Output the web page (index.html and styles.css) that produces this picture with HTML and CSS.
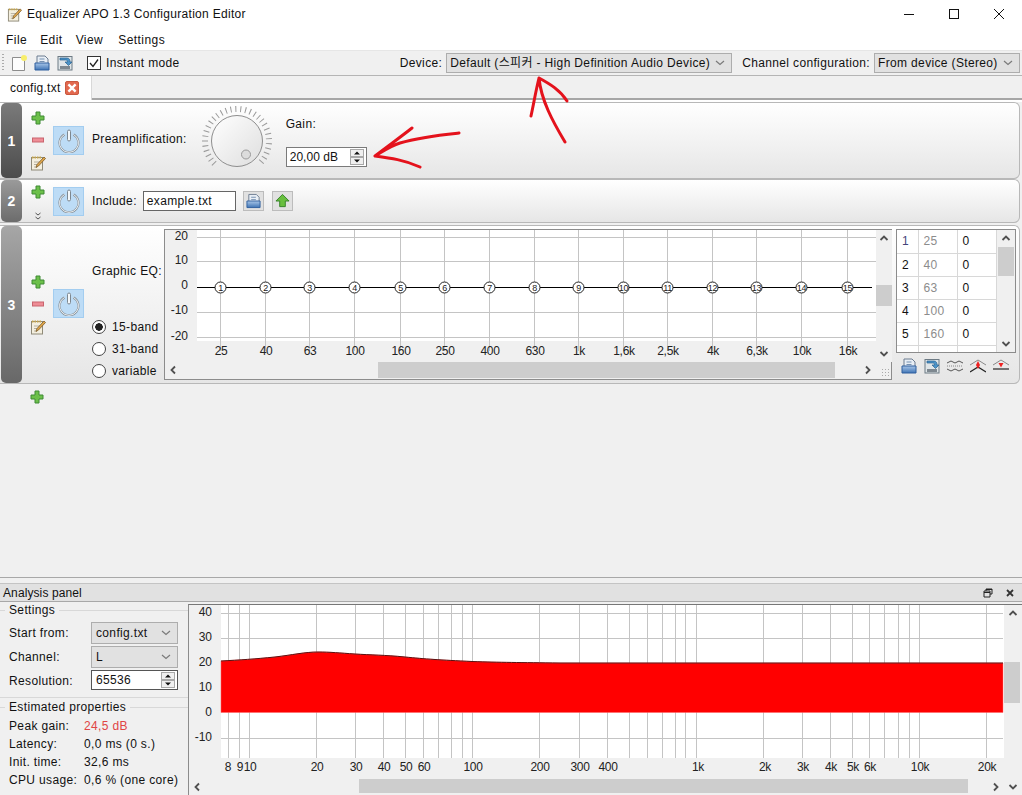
FILE: index.html
```html
<!DOCTYPE html>
<html lang="en">
<head>
<meta charset="utf-8">
<title>Equalizer APO 1.3 Configuration Editor</title>
<link rel="stylesheet" href="styles.css">
</head>
<body>
<svg class="defs" width="0" height="0">
  <defs>
    <linearGradient id="floppyG" x1="0" y1="0" x2="0" y2="1"><stop offset="0" stop-color="#a9c6e8"/><stop offset="1" stop-color="#3f74b5"/></linearGradient>
    <linearGradient id="knobG" x1="0" y1="0" x2="1" y2="1"><stop offset="0" stop-color="#ffffff"/><stop offset="1" stop-color="#dedede"/></linearGradient>
    <symbol id="i-plus" viewBox="0 0 14 14"><path d="M5 1h4v4h4v4H9v4H5V9H1V5h4z" fill="#6cc04a" stroke="#3f8a35" stroke-width="1"/></symbol>
    <symbol id="i-minus" viewBox="0 0 14 14"><rect x="1.5" y="5" width="11" height="4" fill="#ee8d96" stroke="#c9646e"/></symbol>
    <symbol id="i-note" viewBox="0 0 16 16"><rect x="1.5" y="2.5" width="11" height="12.5" fill="#f4efdf" stroke="#8f8a78"/><path d="M2 2.5h10" stroke="#c7a64b" stroke-width="2" stroke-dasharray="1.5 1"/><path d="M4 7h6M4 9.5h4M4 12h3" stroke="#b5b0a0"/><path d="M6 12.5l1-3 7-7.5 1.5 1.500-7 7.500z" fill="#e0a64a" stroke="#7a5a2a" stroke-width=".8"/></symbol>
    <symbol id="i-power" viewBox="0 0 24 24"><path d="M7.500 5.500a9.500 9.500 0 1 0 9 0" fill="none" stroke="#8a949c" stroke-width="2.200"/><path d="M7.500 5.500a9.500 9.500 0 1 0 9 0" fill="none" stroke="#f3f7fa" stroke-width=".9"/><rect x="10.500" y="1" width="3" height="11" rx="1.500" fill="#f3f7fa" stroke="#7e8890"/></symbol>
    <symbol id="i-open" viewBox="0 0 16 16"><path d="M3 1h8l3 3v6H3z" fill="#e8eef5" stroke="#6c7c90"/><path d="M5.500 4h5M5.500 6.500h5" stroke="#7590b0"/><path d="M1 8h14v7H1z" fill="url(#floppyG)" stroke="#2f5f9e"/></symbol>
    <symbol id="i-save" viewBox="0 0 16 16"><rect x="1" y="1.500" width="14" height="13.500" fill="#dfe5e8" stroke="#6d7a84"/><rect x="3" y="11" width="10" height="3" fill="#7e8890"/><path d="M3 3h7c2.500 0 3 2 3 4h2l-3.500 3.500L8 7h2.500c0-1.500-.5-2-2-2H3z" fill="#4a93c8" stroke="#2b628f" stroke-width=".7"/></symbol>
    <symbol id="i-new" viewBox="0 0 16 16"><path d="M1.500 2.500h12v13h-12z" fill="#fdfdfd" stroke="#8d8d8d"/><circle cx="13" cy="3" r="3" fill="#f8ee6b"/></symbol>
    <symbol id="i-up" viewBox="0 0 16 16"><path d="M8 1l7 7h-4v6H5V8H1z" fill="#68bf3e" stroke="#35822a"/></symbol>
    <symbol id="i-chev-d" viewBox="0 0 10 6"><path d="M1 1l4 3.500L9 1" fill="none" stroke="#7a7a7a" stroke-width="1.200"/></symbol>
    <symbol id="sb-up" viewBox="0 0 10 8"><path d="M1.500 6l3.500-3.500L8.500 6" fill="none" stroke="#505050" stroke-width="1.800"/></symbol>
    <symbol id="sb-dn" viewBox="0 0 10 8"><path d="M1.500 2L5 5.500 8.500 2" fill="none" stroke="#505050" stroke-width="1.800"/></symbol>
    <symbol id="sb-lf" viewBox="0 0 8 10"><path d="M6 1.500L2.500 5 6 8.500" fill="none" stroke="#505050" stroke-width="1.800"/></symbol>
    <symbol id="sb-rt" viewBox="0 0 8 10"><path d="M2 1.500L5.500 5 2 8.500" fill="none" stroke="#505050" stroke-width="1.800"/></symbol>
    <symbol id="spin" viewBox="0 0 14 16"><rect x=".5" y=".5" width="13" height="7" fill="#efefef" stroke="#a8a8a8"/><rect x=".5" y="8.500" width="13" height="7" fill="#efefef" stroke="#a8a8a8"/><path d="M7 2.500L10 5.500H4zM7 13.500L4 10.500h6z" fill="#111"/></symbol>
  </defs>
</svg>

<div class="app">
  <header class="titlebar">
    <svg class="ico14"><use href="#i-note"/></svg>
    <span class="title-text">Equalizer APO 1.3 Configuration Editor</span>
    <div class="winctl">
      <svg class="winbtn" viewBox="0 0 12 12"><path d="M1 6.500h10" stroke="#111" stroke-width="1"/></svg>
      <svg class="winbtn" viewBox="0 0 12 12"><rect x="1.500" y="1.500" width="9" height="9" fill="none" stroke="#111"/></svg>
      <svg class="winbtn" viewBox="0 0 12 12"><path d="M1 1l10 10M11 1L1 11" stroke="#111"/></svg>
    </div>
  </header>

  <nav class="menubar"><span>File</span><span>Edit</span><span>View</span><span class="settings-menu">Settings</span></nav>

  <div class="toolbar">
    <div class="grip"></div>
    <svg class="tool new"><use href="#i-new"/></svg>
    <svg class="tool"><use href="#i-open"/></svg>
    <svg class="tool"><use href="#i-save"/></svg>
    <label class="instant"><span class="check"><svg viewBox="0 0 12 12"><path d="M2 6l3 3.500L10 2.500" fill="none" stroke="#222" stroke-width="1.300"/></svg></span>Instant mode</label>
    <span class="dev-label">Device:</span>
    <div class="combo dev-combo"><span class="dev-text">Default (스피커 - High Definition Audio Device)</span><svg class="chev"><use href="#i-chev-d"/></svg></div>
    <span class="chan-label">Channel configuration:</span>
    <div class="combo chan-combo"><span>From device (Stereo)</span><svg class="chev"><use href="#i-chev-d"/></svg></div>
  </div>

  <div class="tabbar">
    <div class="tab">config.txt<span class="tab-x"><svg viewBox="0 0 10 10"><path d="M2 2l6 6M8 2L2 8" stroke="#fff" stroke-width="2"/></svg></span></div>
  </div>

  <main class="workspace">
    <section class="row row1">
      <div class="handle h1">1</div>
      <div class="actions a1">
        <svg class="ico14"><use href="#i-plus"/></svg>
        <svg class="ico14"><use href="#i-minus"/></svg>
        <svg class="ico16"><use href="#i-note"/></svg>
      </div>
      <div class="power"><svg><use href="#i-power"/></svg></div>
      <span class="row-label pre">Preamplification:</span>
      <svg class="knob" viewBox="0 0 72 72">
        <path d="M13.400 58.600A32 32 0 1 1 58.600 58.600" fill="none" stroke="#9a9a9a" stroke-width="6" stroke-dasharray="1 3.900"/>
        <circle cx="36" cy="36" r="25.500" fill="url(#knobG)" stroke="#8e8e8e"/>
        <circle cx="45" cy="49.500" r="4.500" fill="#dcdcdc" stroke="#9a9a9a"/>
      </svg>
      <div class="gain">
        <span>Gain:</span>
        <div class="spinbox gainbox"><span>20,00 dB</span><svg class="spin"><use href="#spin"/></svg></div>
      </div>
    </section>

    <section class="row row2">
      <div class="handle h2">2</div>
      <div class="actions a2">
        <svg class="ico14"><use href="#i-plus"/></svg>
        <svg class="more" viewBox="0 0 8 8"><path d="M1.500 1l2.500 2 2.500-2M1.500 5l2.500 2 2.500-2" fill="none" stroke="#555"/></svg>
      </div>
      <div class="power"><svg><use href="#i-power"/></svg></div>
      <span class="row-label">Include:</span>
      <div class="textfield">example.txt</div>
      <button class="iconbtn"><svg><use href="#i-open"/></svg></button>
      <button class="iconbtn up"><svg><use href="#i-up"/></svg></button>
    </section>

    <section class="row row3">
      <div class="handle h3">3</div>
      <div class="actions a3">
        <svg class="ico14"><use href="#i-plus"/></svg>
        <svg class="ico14"><use href="#i-minus"/></svg>
        <svg class="ico16"><use href="#i-note"/></svg>
      </div>
      <div class="power"><svg><use href="#i-power"/></svg></div>
      <div class="eq-side">
        <span class="row-label">Graphic EQ:</span>
        <div class="radios">
          <div class="radio on"><i></i>15-band</div>
          <div class="radio"><i></i>31-band</div>
          <div class="radio"><i></i>variable</div>
        </div>
      </div>
      <div class="eq-widget">
        <svg class="eq-chart" viewBox="165 230 711 132">
          <rect x="165" y="230" width="711" height="132" fill="#f0f0f0"/>
          <rect x="197" y="230" width="679" height="111" fill="#fff"/>
          <path class="grid" d="M197 237.500H876M197 261.500H876M197 312.500H876M197 337.500H876M220.500 230V351M265.500 230V351M309.500 230V351M354.500 230V351M400.500 230V351M444.500 230V351M489.500 230V351M534.500 230V351M578.500 230V351M623.500 230V351M667.500 230V351M712.500 230V351M756.500 230V351M801.500 230V351M847.500 230V351"/>
          <path d="M197 287.500H872" stroke="#000" stroke-width="1.200"/>
          <g class="nodes">
            <circle cx="220.500" cy="287.500" r="5.500"/><circle cx="265.500" cy="287.500" r="5.500"/><circle cx="309.500" cy="287.500" r="5.500"/><circle cx="354.500" cy="287.500" r="5.500"/><circle cx="400.500" cy="287.500" r="5.500"/><circle cx="444.500" cy="287.500" r="5.500"/><circle cx="489.500" cy="287.500" r="5.500"/><circle cx="534.500" cy="287.500" r="5.500"/><circle cx="578.500" cy="287.500" r="5.500"/><circle cx="623.500" cy="287.500" r="5.500"/><circle cx="667.500" cy="287.500" r="5.500"/><circle cx="712.500" cy="287.500" r="5.500"/><circle cx="756.500" cy="287.500" r="5.500"/><circle cx="801.500" cy="287.500" r="5.500"/><circle cx="847.500" cy="287.500" r="5.500"/>
          </g>
          <g class="nodenum">
            <text x="220.500" y="291">1</text><text x="265.500" y="291">2</text><text x="309.500" y="291">3</text><text x="354.500" y="291">4</text><text x="400.500" y="291">5</text><text x="444.500" y="291">6</text><text x="489.500" y="291">7</text><text x="534.500" y="291">8</text><text x="578.500" y="291">9</text><text x="623.500" y="291">10</text><text x="667.500" y="291">11</text><text x="712.500" y="291">12</text><text x="756.500" y="291">13</text><text x="801.500" y="291">14</text><text x="847.500" y="291">15</text>
          </g>
          <g class="ylab">
            <text x="188" y="240">20</text><text x="188" y="264">10</text><text x="188" y="289">0</text><text x="188" y="314">-10</text><text x="188" y="340">-20</text>
          </g>
          <g class="xlab">
            <text x="221" y="355">25</text><text x="266" y="355">40</text><text x="310" y="355">63</text><text x="355" y="355">100</text><text x="401" y="355">160</text><text x="445" y="355">250</text><text x="490" y="355">400</text><text x="535" y="355">630</text><text x="579" y="355">1k</text><text x="624" y="355">1,6k</text><text x="668" y="355">2,5k</text><text x="713" y="355">4k</text><text x="757" y="355">6,3k</text><text x="802" y="355">10k</text><text x="848" y="355">16k</text>
          </g>
        </svg>
        <div class="vbar eq-v">
          <svg class="sb"><use href="#sb-up"/></svg>
          <div class="track"><div class="thumb"></div></div>
          <svg class="sb"><use href="#sb-dn"/></svg>
        </div>
        <div class="hbar eq-h">
          <svg class="sbh"><use href="#sb-lf"/></svg>
          <div class="track"><div class="thumb"></div></div>
          <svg class="sbh"><use href="#sb-rt"/></svg>
        </div>
        <div class="corner"></div>
      </div>
      <div class="table-side">
        <div class="table-box">
          <table class="bands">
            <tr><th>1</th><td class="f">25</td><td>0</td></tr>
            <tr><th>2</th><td class="f">40</td><td>0</td></tr>
            <tr><th>3</th><td class="f">63</td><td>0</td></tr>
            <tr><th>4</th><td class="f">100</td><td>0</td></tr>
            <tr><th>5</th><td class="f">160</td><td>0</td></tr>
            <tr class="cut"><th></th><td></td><td></td></tr>
          </table>
          <div class="vbar tb-v">
            <svg class="sb"><use href="#sb-up"/></svg>
            <div class="track"><div class="thumb"></div></div>
            <svg class="sb"><use href="#sb-dn"/></svg>
          </div>
        </div>
        <div class="table-tools">
          <svg class="tool"><use href="#i-open"/></svg>
          <svg class="tool"><use href="#i-save"/></svg>
          <svg class="tool" viewBox="0 0 16 16"><path d="M0 5l4-2 4 2 4-2 4 2M0 11l4 2 4-2 4 2 4-2" fill="none" stroke="#555"/><path d="M0 8h16" stroke="#888" stroke-dasharray="1 1"/></svg>
          <svg class="tool" viewBox="0 0 16 16"><path d="M0 7l8-5 8 5" fill="none" stroke="#888"/><path d="M0 14l8-5 8 5" fill="none" stroke="#222" stroke-width="1.200"/><path d="M8 3l2 4H6zM8 11L6 7h4z" fill="#e22"/></svg>
          <svg class="tool" viewBox="0 0 16 16"><path d="M0 7l8-5 8 5" fill="none" stroke="#888"/><path d="M0 11h16" stroke="#222" stroke-width="1.200"/><path d="M8 9.500L5.500 5h5z" fill="#e22"/></svg>
        </div>
      </div>
    </section>

    <div class="add-row"><svg class="ico14"><use href="#i-plus"/></svg></div>
  </main>

  <section class="dock">
    <div class="dock-title">
      <span>Analysis panel</span>
      <svg class="dock-ico" viewBox="0 0 10 10"><path d="M3 3V1h6v5H7M1 3h6v6H1zM1 4.500h6M3 1.500h6" fill="none" stroke="#222"/></svg>
      <svg class="dock-ico" viewBox="0 0 10 10"><path d="M2 2l6 6M8 2L2 8" stroke="#333" stroke-width="1.800"/></svg>
    </div>
    <div class="dock-body">
      <aside class="dock-side">
        <fieldset class="group settings">
          <legend>Settings</legend>
          <div class="form-row"><span>Start from:</span><div class="combo small"><span>config.txt</span><svg class="chev"><use href="#i-chev-d"/></svg></div></div>
          <div class="form-row"><span>Channel:</span><div class="combo small"><span>L</span><svg class="chev"><use href="#i-chev-d"/></svg></div></div>
          <div class="form-row"><span>Resolution:</span><div class="spinbox small res"><span>65536</span><svg class="spin"><use href="#spin"/></svg></div></div>
        </fieldset>
        <fieldset class="group props">
          <legend>Estimated properties</legend>
          <dl class="prop"><dt>Peak gain:</dt><dd class="peak">24,5 dB</dd></dl>
          <dl class="prop"><dt>Latency:</dt><dd>0,0 ms (0 s.)</dd></dl>
          <dl class="prop"><dt>Init. time:</dt><dd>32,6 ms</dd></dl>
          <dl class="prop"><dt>CPU usage:</dt><dd>0,6 % (one core)</dd></dl>
        </fieldset>
      </aside>
      <div class="an-widget">
        <svg class="an-chart" viewBox="189 605 815 174">
          <rect x="189" y="605" width="815" height="174" fill="#f0f0f0"/>
          <rect x="221" y="605" width="783" height="153" fill="#fff"/>
          <path class="grid" d="M221 613.500H1003M221 638.500H1003M221 663.500H1003M221 688.500H1003M221 738.500H1003M228.500 604V758M239.500 604V758M249.500 604V758M316.500 604V758M355.500 604V758M383.500 604V758M405.500 604V758M423.500 604V758M438.500 604V758M451.500 604V758M462.500 604V758M472.500 604V758M539.500 604V758M579.500 604V758M607.500 604V758M629.500 604V758M647.500 604V758M662.500 604V758M675.500 604V758M685.500 604V758M696.500 604V758M763.500 604V758M802.500 604V758M830.500 604V758M852.500 604V758M869.500 604V758M884.500 604V758M898.500 604V758M909.500 604V758M919.500 604V758M986.500 604V758"/>
          <path d="M221 661C240 660 255 659 275 657C292 655 305 652 318 652C330 652 340 653 355 654C370 655 385 655 405 657C425 659 440 660 472 661.500C500 662.500 520 662.500 560 663H1003V712.500H221Z" fill="#f00" stroke="#f66" stroke-width=".5"/>
          <path d="M221 661C240 660 255 659 275 657C292 655 305 652 318 652C330 652 340 653 355 654C370 655 385 655 405 657C425 659 440 660 472 661.500C500 662.500 520 662.500 560 663H1003" fill="none" stroke="#5a1010" stroke-width="1"/>
          <g class="ylab">
            <text x="212" y="616">40</text><text x="212" y="641">30</text><text x="212" y="666">20</text><text x="212" y="691">10</text><text x="212" y="716">0</text><text x="212" y="741">-10</text>
          </g>
          <g class="xlab">
            <text x="228" y="771">8</text><text x="240" y="771">9</text><text x="250" y="771">10</text><text x="317" y="771">20</text><text x="356" y="771">30</text><text x="384" y="771">40</text><text x="406" y="771">50</text><text x="424" y="771">60</text><text x="473" y="771">100</text><text x="540" y="771">200</text><text x="580" y="771">300</text><text x="608" y="771">400</text><text x="698" y="771">1k</text><text x="765" y="771">2k</text><text x="803" y="771">3k</text><text x="831" y="771">4k</text><text x="853" y="771">5k</text><text x="870" y="771">6k</text><text x="920" y="771">10k</text><text x="987" y="771">20k</text>
          </g>
        </svg>
        <div class="vbar an-v">
          <svg class="sb"><use href="#sb-up"/></svg>
          <div class="track"><div class="thumb"></div></div>
          <svg class="sb"><use href="#sb-dn"/></svg>
        </div>
        <div class="hbar an-h">
          <svg class="sbh"><use href="#sb-lf"/></svg>
          <div class="track"><div class="thumb"></div></div>
          <svg class="sbh"><use href="#sb-rt"/></svg>
        </div>
      </div>
    </div>
  </section>

  <svg class="scribble" viewBox="0 0 1022 795">
    <path d="M459 133C440 135 420 137 400 143C390 146 382 152 375 156C390 158 405 160 420 167M412 128C402 136 388 146 375 156M531 116C534 102 536 90 539 78C541 100 553 122 565 142M539 78C550 84 560 90 567 101" fill="none" stroke="#e4121c" stroke-width="3" stroke-linecap="round" stroke-linejoin="round"/>
  </svg>
</div>
</body>
</html>
```
FILE: styles.css
```css
* { box-sizing: border-box; }
html, body { margin: 0; padding: 0; }
body {
  width: 1022px; height: 795px; overflow: hidden; background: #f0f0f0; color: #111;
  font: 12px "Liberation Sans", "Noto Sans CJK KR", sans-serif; letter-spacing: .35px;
}
.defs { position: absolute; }
.app { position: relative; width: 1022px; height: 795px; display: flex; flex-direction: column; overflow: hidden; }
svg { display: block; flex: none; }
.ico14 { width: 14px; height: 14px; }
.ico16 { width: 16px; height: 16px; }

.titlebar { height: 28px; background: #fff; display: flex; align-items: center; padding-left: 7px; flex: none; }
.titlebar .ico14 { width: 15px; height: 15px; }
.title-text { margin-left: 5px; letter-spacing: .3px; }
.winctl { margin-left: auto; display: flex; align-items: center; gap: 33px; padding-right: 17px; }
.winbtn { width: 12px; height: 12px; }

.menubar { height: 22px; background: #fff; display: flex; align-items: center; gap: 13px; padding: 1px 0 0 6px; flex: none; letter-spacing: .45px; }
.settings-menu { margin-left: 2px; }

.toolbar { height: 26px; display: flex; align-items: center; background: #f0f0f0; border-top: 1px solid #e6e6e6; border-bottom: 1px solid #b5b5b5; padding: 0 2px; flex: none; white-space: nowrap; }
.grip { width: 2px; height: 18px; background: repeating-linear-gradient(#aaa 0 1px, transparent 1px 3px); margin-right: 7px; }
.tool { width: 16px; height: 16px; }
.toolbar .tool { margin-right: 7px; }
.instant { display: flex; align-items: center; margin-left: 7px; }
.check { width: 14px; height: 14px; border: 1px solid #333; background: #fff; margin-right: 5px; display: block; }
.check svg { width: 12px; height: 12px; }
.dev-label { margin-left: auto; }
.combo { display: flex; align-items: center; justify-content: space-between; height: 20px; background: #e1e1e1; border: 1px solid #adadad; padding: 0 6px 0 3px; white-space: nowrap; }
.chev { width: 10px; height: 6px; }
.dev-combo { width: 286px; margin-left: 4px; }
.dev-text { padding-bottom: 3px; }
.chan-label { margin-left: 10px; }
.chan-combo { width: 146px; margin-left: 4px; }

.tabbar { height: 26px; background: #f0f0f0; flex: none; border-bottom: 2px solid #fff; box-shadow: inset 0 -2px 0 #a6a6a6; }
.tab { width: 92px; height: 24px; background: #fff; display: flex; align-items: center; padding-left: 10px; border-right: 1px solid #d8d8d8; letter-spacing: .25px; }
.tab-x { width: 14px; height: 14px; border-radius: 2px; background: #e2694f; border: 1px solid #c9583f; margin-left: 4px; display: block; }
.tab-x svg { width: 12px; height: 12px; }

.workspace { flex: none; height: 476px; display: flex; flex-direction: column; border-bottom: 1px solid #a8a8a8; }
.row { display: flex; flex: none; align-items: center; margin-right: 2px; border: 1px solid #b8b8b8; border-left: 0; border-radius: 0 6px 6px 0; background: linear-gradient(#ffffff, #e6e6e6); }
.row1 { height: 77px; }
.row2 { height: 44px; }
.row3 { height: 159px; margin-top: 2px; }
.handle { width: 21px; height: 100%; margin-left: 1px; border-radius: 5px; color: #fff; font-size: 14px; font-weight: bold; display: flex; align-items: center; justify-content: center; flex: none; letter-spacing: 0; }
.h1 { background: linear-gradient(#7a7a7a, #4c4c4c); }
.h2 { background: linear-gradient(#9a9a9a, #6c6c6c); }
.h3 { background: linear-gradient(#a6a6a6, #686868); }
.actions { width: 31px; display: flex; flex-direction: column; align-items: center; flex: none; }
.a1 { gap: 8px; }
.a3 { gap: 8px; margin-top: 0; }
.a2 { gap: 13px; margin-top: 3px; }
.more { width: 8px; height: 8px; }
.power { width: 31px; height: 29px; background: #bddcf6; border: 1px solid #a3cdf0; display: flex; align-items: center; justify-content: center; flex: none; }
.power svg { width: 24px; height: 24px; }
.row3 .power { margin-top: -2px; }
.row-label { margin-left: 8px; }
.pre { margin-bottom: 3px; }
.knob { width: 72px; height: 72px; margin-left: 14px; }
.gain { display: flex; flex-direction: column; margin-left: 13px; gap: 16px; margin-top: 3px; }
.spinbox { display: flex; align-items: center; justify-content: space-between; height: 20px; background: #fff; border: 1px solid #7a7a7a; padding: 0 2px 0 3px; }
.gainbox { width: 81px; letter-spacing: .05px; }
.spin { width: 14px; height: 16px; }

.textfield { width: 93px; height: 20px; margin-left: 6px; background: #fff; border: 1px solid #666; padding: 2px 3px; }
.iconbtn { width: 21px; height: 20px; padding: 1px 2px; margin: 0 0 0 7px; background: #e1e1e1; border: 1px solid #bcbcbc; }
.iconbtn svg { width: 15px; height: 16px; }
.iconbtn.up { margin-left: 8px; }

.eq-side { height: 100%; width: 80px; flex: none; display: flex; flex-direction: column; padding-top: 38px; }
.eq-side .row-label { white-space: nowrap; }
.radios { display: flex; flex-direction: column; gap: 7px; margin: 41px 0 0 8px; }
.radio { display: flex; align-items: center; height: 15px; white-space: nowrap; }
.radio i { width: 14px; height: 14px; border: 1px solid #444; border-radius: 50%; background: #fff; margin-right: 6px; flex: none; display: block; }
.radio.on i { background: radial-gradient(circle, #222 0 3.500px, #fff 4px); }

.eq-widget { width: 728px; height: 151px; border: 1px solid #8c8c8c; background: #f0f0f0; align-self: flex-start; margin-top: 3px; display: grid; grid-template-columns: 711px 16px; grid-template-rows: 132px 17px; flex: none; }
.eq-chart { width: 711px; height: 132px; }
.grid { stroke: #c4c4c4; stroke-width: 1; fill: none; }
.nodes circle { fill: #fff; stroke: #222; stroke-width: 1; }
.nodenum text { font-size: 9px; text-anchor: middle; fill: #222; letter-spacing: -.3px; }
.ylab text { text-anchor: end; font-size: 12px; fill: #222; letter-spacing: 0; }
.xlab text { text-anchor: middle; font-size: 12px; fill: #222; letter-spacing: -.3px; }

.vbar { display: flex; flex-direction: column; align-items: stretch; background: #f0f0f0; min-height: 0; }
.hbar { display: flex; align-items: center; background: #f0f0f0; min-height: 0; min-width: 0; }
.track { flex: 1; position: relative; align-self: stretch; }
.thumb { position: absolute; background: #cdcdcd; }
.sb { width: 10px; height: 8px; margin: 4px auto; }
.sbh { width: 8px; height: 10px; margin: 0 4px; }
.eq-v { grid-row: 1; grid-column: 2; }
.eq-v .thumb { left: 0; right: 0; top: 39px; height: 21px; }
.eq-h { grid-row: 2; grid-column: 1; padding-bottom: 1px; }
.eq-h .thumb { top: 0; bottom: 0; left: 197px; width: 457px; }
.corner { display: flex; justify-content: flex-end; align-items: flex-end; }
.corner::after { content: ""; width: 9px; height: 9px; margin: 0 2px 2px 0; background: radial-gradient(circle, #aaa 0 .7px, transparent 1px) 0 0 / 3px 3px; }

.table-side { margin-left: 4px; width: 121px; flex: none; align-self: flex-start; margin-top: 3px; display: flex; flex-direction: column; }
.table-box { height: 124px; width: 120px; border: 1px solid #8c8c8c; background: #fff; display: flex; overflow: hidden; }
.bands { border-collapse: collapse; width: 100px; table-layout: fixed; height: 122px; flex: none; }
.bands th, .bands td { border: 1px solid #d8d8d8; height: 23px; padding: 0 0 0 5px; font-weight: normal; text-align: left; font-size: 12px; }
.bands tr:first-child th, .bands tr:first-child td { border-top: 0; }
.bands th { width: 21px; border-left: 0; color: #111; }
.bands tr:first-child th { color: #44447a; }
.bands td.f { width: 39px; color: #8c8c8c; }
.tb-v { flex: 1; }
.tb-v .thumb { left: 1px; right: 1px; top: 1px; height: 29px; }
.table-tools { display: flex; gap: 7px; padding: 5px 0 0 5px; }
.table-tools .tool { width: 16px; height: 16px; }

.add-row { padding: 6px 0 0 30px; }

.dock { flex: 1; display: flex; flex-direction: column; min-height: 0; }
.dock-title { height: 19px; margin-top: 5px; flex: none; background: #e1e1e1; border-top: 1px solid #c4c4c4; border-bottom: 1px solid #a8a8a8; display: flex; align-items: center; padding: 1px 7px 0 3px; letter-spacing: .1px; }
.dock-title span { flex: 1; }
.dock-ico { width: 10px; height: 10px; margin-left: 12px; }
.dock-body { flex: 1; display: flex; min-height: 0; padding-top: 2px; }
.dock-side { width: 188px; flex: none; display: flex; flex-direction: column; }
.group { margin: 0; padding: 0; border: 0; border-top: 1px solid #d8d8d8; min-width: 0; }
.group legend { margin-left: -4px; padding: 0 4px; line-height: 14px; }
.settings { height: 95px; border-bottom: 1px solid #d8d8d8; padding: 5px 10px 0 9px; margin-top: -1px; display: flex; flex-direction: column; gap: 2px; }
.form-row { display: flex; align-items: center; justify-content: space-between; height: 22px; }
.small { width: 87px; height: 22px; padding-left: 4px; }
.small.res { height: 20px; border-color: #555; margin-top: -2px; }
.props { margin-top: 2px; padding: 3px 5px 0 9px; }
.prop { display: flex; margin: 0; height: 18px; align-items: center; white-space: nowrap; }
.prop dt { width: 75px; flex: none; }
.prop dd { margin: 0; }
.prop .peak { color: #e04545; }

.an-widget { width: 834px; flex: none; border-top: 1px solid #777; border-left: 1px solid #8c8c8c; display: grid; grid-template-columns: 815px 18px; grid-template-rows: 174px 16px; background: #f0f0f0; }
.an-chart { width: 815px; height: 174px; }
.an-v { grid-row: 1 / 3; grid-column: 2; }
.an-v .thumb { left: 0; right: 2px; top: 41px; height: 41px; }
.an-h { grid-row: 2; grid-column: 1; }
.an-h .thumb { top: 0; bottom: 2px; left: 154px; width: 609px; }

.scribble { position: absolute; left: 0; top: 0; width: 1022px; height: 795px; pointer-events: none; }
```
